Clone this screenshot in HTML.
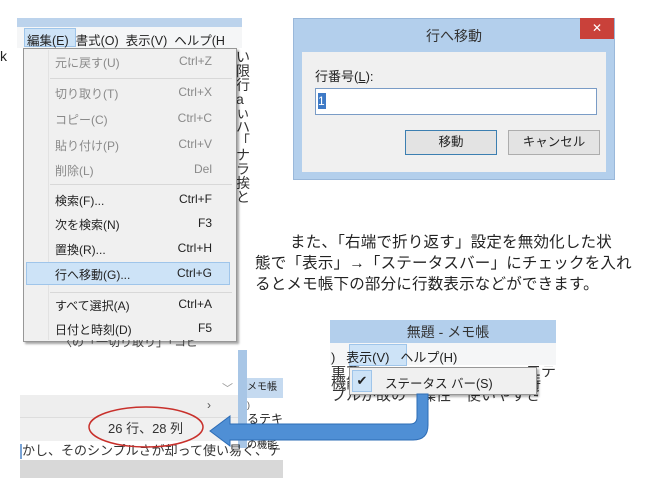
<!DOCTYPE html>
<html><head><meta charset="utf-8"><style>
*{margin:0;padding:0;box-sizing:border-box}
body{width:670px;height:489px;background:#fff;position:relative;overflow:hidden;font-family:"Liberation Sans","Noto Sans CJK JP",sans-serif;color:#222}
.a{position:absolute;white-space:nowrap}
.mi{position:absolute;left:55px;font-size:12px;color:#222}
.sc{position:absolute;left:120px;width:92px;text-align:right;font-size:12px}
.dis{color:#8a8a8a}
.sep{position:absolute;left:50px;width:182px;height:1px;background:#d8d8d8}
.para{font-size:15.5px;color:#222;letter-spacing:0.2px}
</style></head><body>
<!-- menu screenshot -->
<div class="a" style="left:17px;top:18px;width:225px;height:9px;background:#bcd3ec"></div>
<div class="a" style="left:17px;top:27px;width:225px;height:21px;background:#f5f6f7"></div>
<div class="a" style="left:24px;top:28px;width:52px;height:19px;background:#cde3f7;border:1px solid #9fc5ea"></div>
<div class="a" style="left:27px;top:30px;font-size:12.5px">編集(E)&nbsp;&nbsp;書式(O)&nbsp;&nbsp;表示(V)&nbsp;&nbsp;ヘルプ(H</div>
<div class="a" style="left:0;top:48px;font-size:14px">k</div>
<div class="a" style="left:236px;top:50px;width:14px;height:290px;font-size:14px;line-height:14px;overflow:hidden;white-space:normal;color:#333">い限行aぃハ「aナ ラ 挨 と</div>
<div class="a" style="left:23px;top:48px;width:214px;height:294px;background:#f0f0f0;border:1px solid #979797;box-shadow:2px 2px 2px rgba(0,0,0,.35)"></div>
<div class="a" style="left:48px;top:50px;width:1px;height:290px;background:#e2e2e2"></div>
<div class="a" style="left:26px;top:262px;width:204px;height:23px;background:#cde3f7;border:1px solid #9fc5ea"></div>
<div class="mi dis" style="top:54px">元に戻す(U)</div><div class="sc dis" style="top:54px">Ctrl+Z</div>
<div class="sep" style="top:78px"></div>
<div class="mi dis" style="top:85px">切り取り(T)</div><div class="sc dis" style="top:85px">Ctrl+X</div>
<div class="mi dis" style="top:111px">コピー(C)</div><div class="sc dis" style="top:111px">Ctrl+C</div>
<div class="mi dis" style="top:137px">貼り付け(P)</div><div class="sc dis" style="top:137px">Ctrl+V</div>
<div class="mi dis" style="top:162px">削除(L)</div><div class="sc dis" style="top:162px">Del</div>
<div class="sep" style="top:184px"></div>
<div class="mi" style="top:192px">検索(F)...</div><div class="sc" style="top:192px">Ctrl+F</div>
<div class="mi" style="top:216px">次を検索(N)</div><div class="sc" style="top:216px">F3</div>
<div class="mi" style="top:241px">置換(R)...</div><div class="sc" style="top:241px">Ctrl+H</div>
<div class="mi" style="top:266px">行へ移動(G)...</div><div class="sc" style="top:266px">Ctrl+G</div>
<div class="sep" style="top:292px"></div>
<div class="mi" style="top:297px">すべて選択(A)</div><div class="sc" style="top:297px">Ctrl+A</div>
<div class="mi" style="top:321px">日付と時刻(D)</div><div class="sc" style="top:321px">F5</div>
<div class="a" style="left:60px;top:340px;font-size:12px;color:#444;height:8px;overflow:hidden;line-height:4px">〈の「一切り取り」「コピ</div>
<!-- dialog -->
<div class="a" style="left:293px;top:18px;width:322px;height:162px;background:#b3cfec;border:1px solid #9ab8da"></div>
<div class="a" style="left:293px;top:26px;width:322px;text-align:center;font-size:14px;color:#333">行へ移動</div>
<div class="a" style="left:580px;top:18px;width:34px;height:21px;background:#c9413a;color:#fff;text-align:center;font-size:12px;line-height:20px">✕</div>
<div class="a" style="left:302px;top:52px;width:304px;height:120px;background:#f0f0f0"></div>
<div class="a" style="left:315px;top:66px;font-size:13px">行番号(<u>L</u>):</div>
<div class="a" style="left:315px;top:88px;width:282px;height:27px;background:#fff;border:1px solid #7a9cc6"></div>
<div class="a" style="left:318px;top:93px;width:8px;height:16px;background:#3e7ac6;color:#fff;font-size:12px;line-height:16px">1</div>
<div class="a" style="left:405px;top:130px;width:92px;height:25px;background:#e3e3e3;border:1px solid #3c7fb1;text-align:center;font-size:12.5px;line-height:23px">移動</div>
<div class="a" style="left:508px;top:130px;width:92px;height:25px;background:#e3e3e3;border:1px solid #adadad;text-align:center;font-size:12.5px;line-height:23px">キャンセル</div>
<!-- paragraph -->
<div class="a para" style="left:290px;top:230px">また、「右端で折り返す」設定を無効化した状</div>
<div class="a para" style="left:255px;top:251px">態で「表示」→「ステータスバー」にチェックを入れ</div>
<div class="a para" style="left:255px;top:272px">るとメモ帳下の部分に行数表示などができます。</div>
<!-- notepad view menu -->
<div class="a" style="left:330px;top:320px;width:226px;height:23px;background:#b3cfec"></div>
<div class="a" style="left:330px;top:322px;width:226px;padding-left:10px;text-align:center;font-size:14px;color:#333">無題 - メモ帳</div>
<div class="a" style="left:330px;top:343px;width:226px;height:22px;background:#f5f6f7"></div>
<div class="a" style="left:349px;top:344px;width:58px;height:22px;background:#cde3f7;border:1px solid #9fc5ea"></div>
<div class="a" style="left:331px;top:347px;font-size:13px">)&nbsp;&nbsp;&nbsp;表示(V)&nbsp;&nbsp;&nbsp;ヘルプ(H)</div>
<div class="a" style="left:331px;top:366px;width:225px;height:36px;font-size:15px;line-height:12px;color:#333;white-space:normal;overflow:hidden">重で　　　　　　　　　　　エテ<br>機能なので最低限の機能しか持<br>プルが故の　操性　使いやすさ</div>
<div class="a" style="left:349px;top:367px;width:188px;height:28px;background:#f0f0f0;border:1px solid #979797;box-shadow:2px 2px 2px rgba(0,0,0,.3)"></div>
<div class="a" style="left:352px;top:370px;width:20px;height:22px;background:#cde3f7;border:1px solid #9fc5ea;text-align:center;font-size:13px;line-height:20px">✔</div>
<div class="a" style="left:385px;top:373px;font-size:12.5px">ステータス バー(S)</div>
<!-- bottom-left notepad -->
<div class="a" style="left:20px;top:395px;width:218px;height:22px;background:#eee"></div>
<div class="a" style="left:222px;top:380px;color:#999;font-size:11px">﹀</div>
<div class="a" style="left:207px;top:398px;font-size:12px;color:#555">›</div>
<div class="a" style="left:20px;top:417px;width:218px;height:24px;background:#f0f0f0;border-top:1px solid #ddd"></div>
<div class="a" style="left:108px;top:418px;font-size:13px;color:#333">26 行、28 列</div>
<div class="a" style="left:238px;top:350px;width:9px;height:98px;background:#a8c6e6"></div>
<div class="a" style="left:247px;top:378px;width:36px;height:20px;background:#c5daf0;font-size:10px;line-height:20px;overflow:hidden">メモ帳</div>
<div class="a" style="left:247px;top:400px;font-size:9px;color:#555">)</div>
<div class="a" style="left:247px;top:410px;width:36px;font-size:12px;overflow:hidden">るテキ</div>
<div class="a" style="left:247px;top:436px;width:36px;font-size:10px;overflow:hidden">の機能</div>
<div class="a" style="left:20px;top:444px;width:263px;font-size:13px;line-height:14px;overflow:hidden;height:15px;color:#333;border-left:2px solid #7aa4d6">かし、そのシンプルさが却って使い易く、テ</div>
<div class="a" style="left:20px;top:460px;width:263px;height:18px;background:#d8d8d8"></div>
<svg class="a" style="left:0;top:0" width="670" height="489">
<ellipse cx="146" cy="427" rx="57" ry="20" fill="none" stroke="#c8302b" stroke-width="1.5"/>
<path d="M417 394 L428 394 L428 425 Q428 440 413 440 L230 440 L230 446 L210 431 L230 416 L230 424 L410 424 Q417 424 417 417 Z" fill="#4f8fd5" stroke="#2d6cb5" stroke-width="1"/>
</svg>
</body></html>
